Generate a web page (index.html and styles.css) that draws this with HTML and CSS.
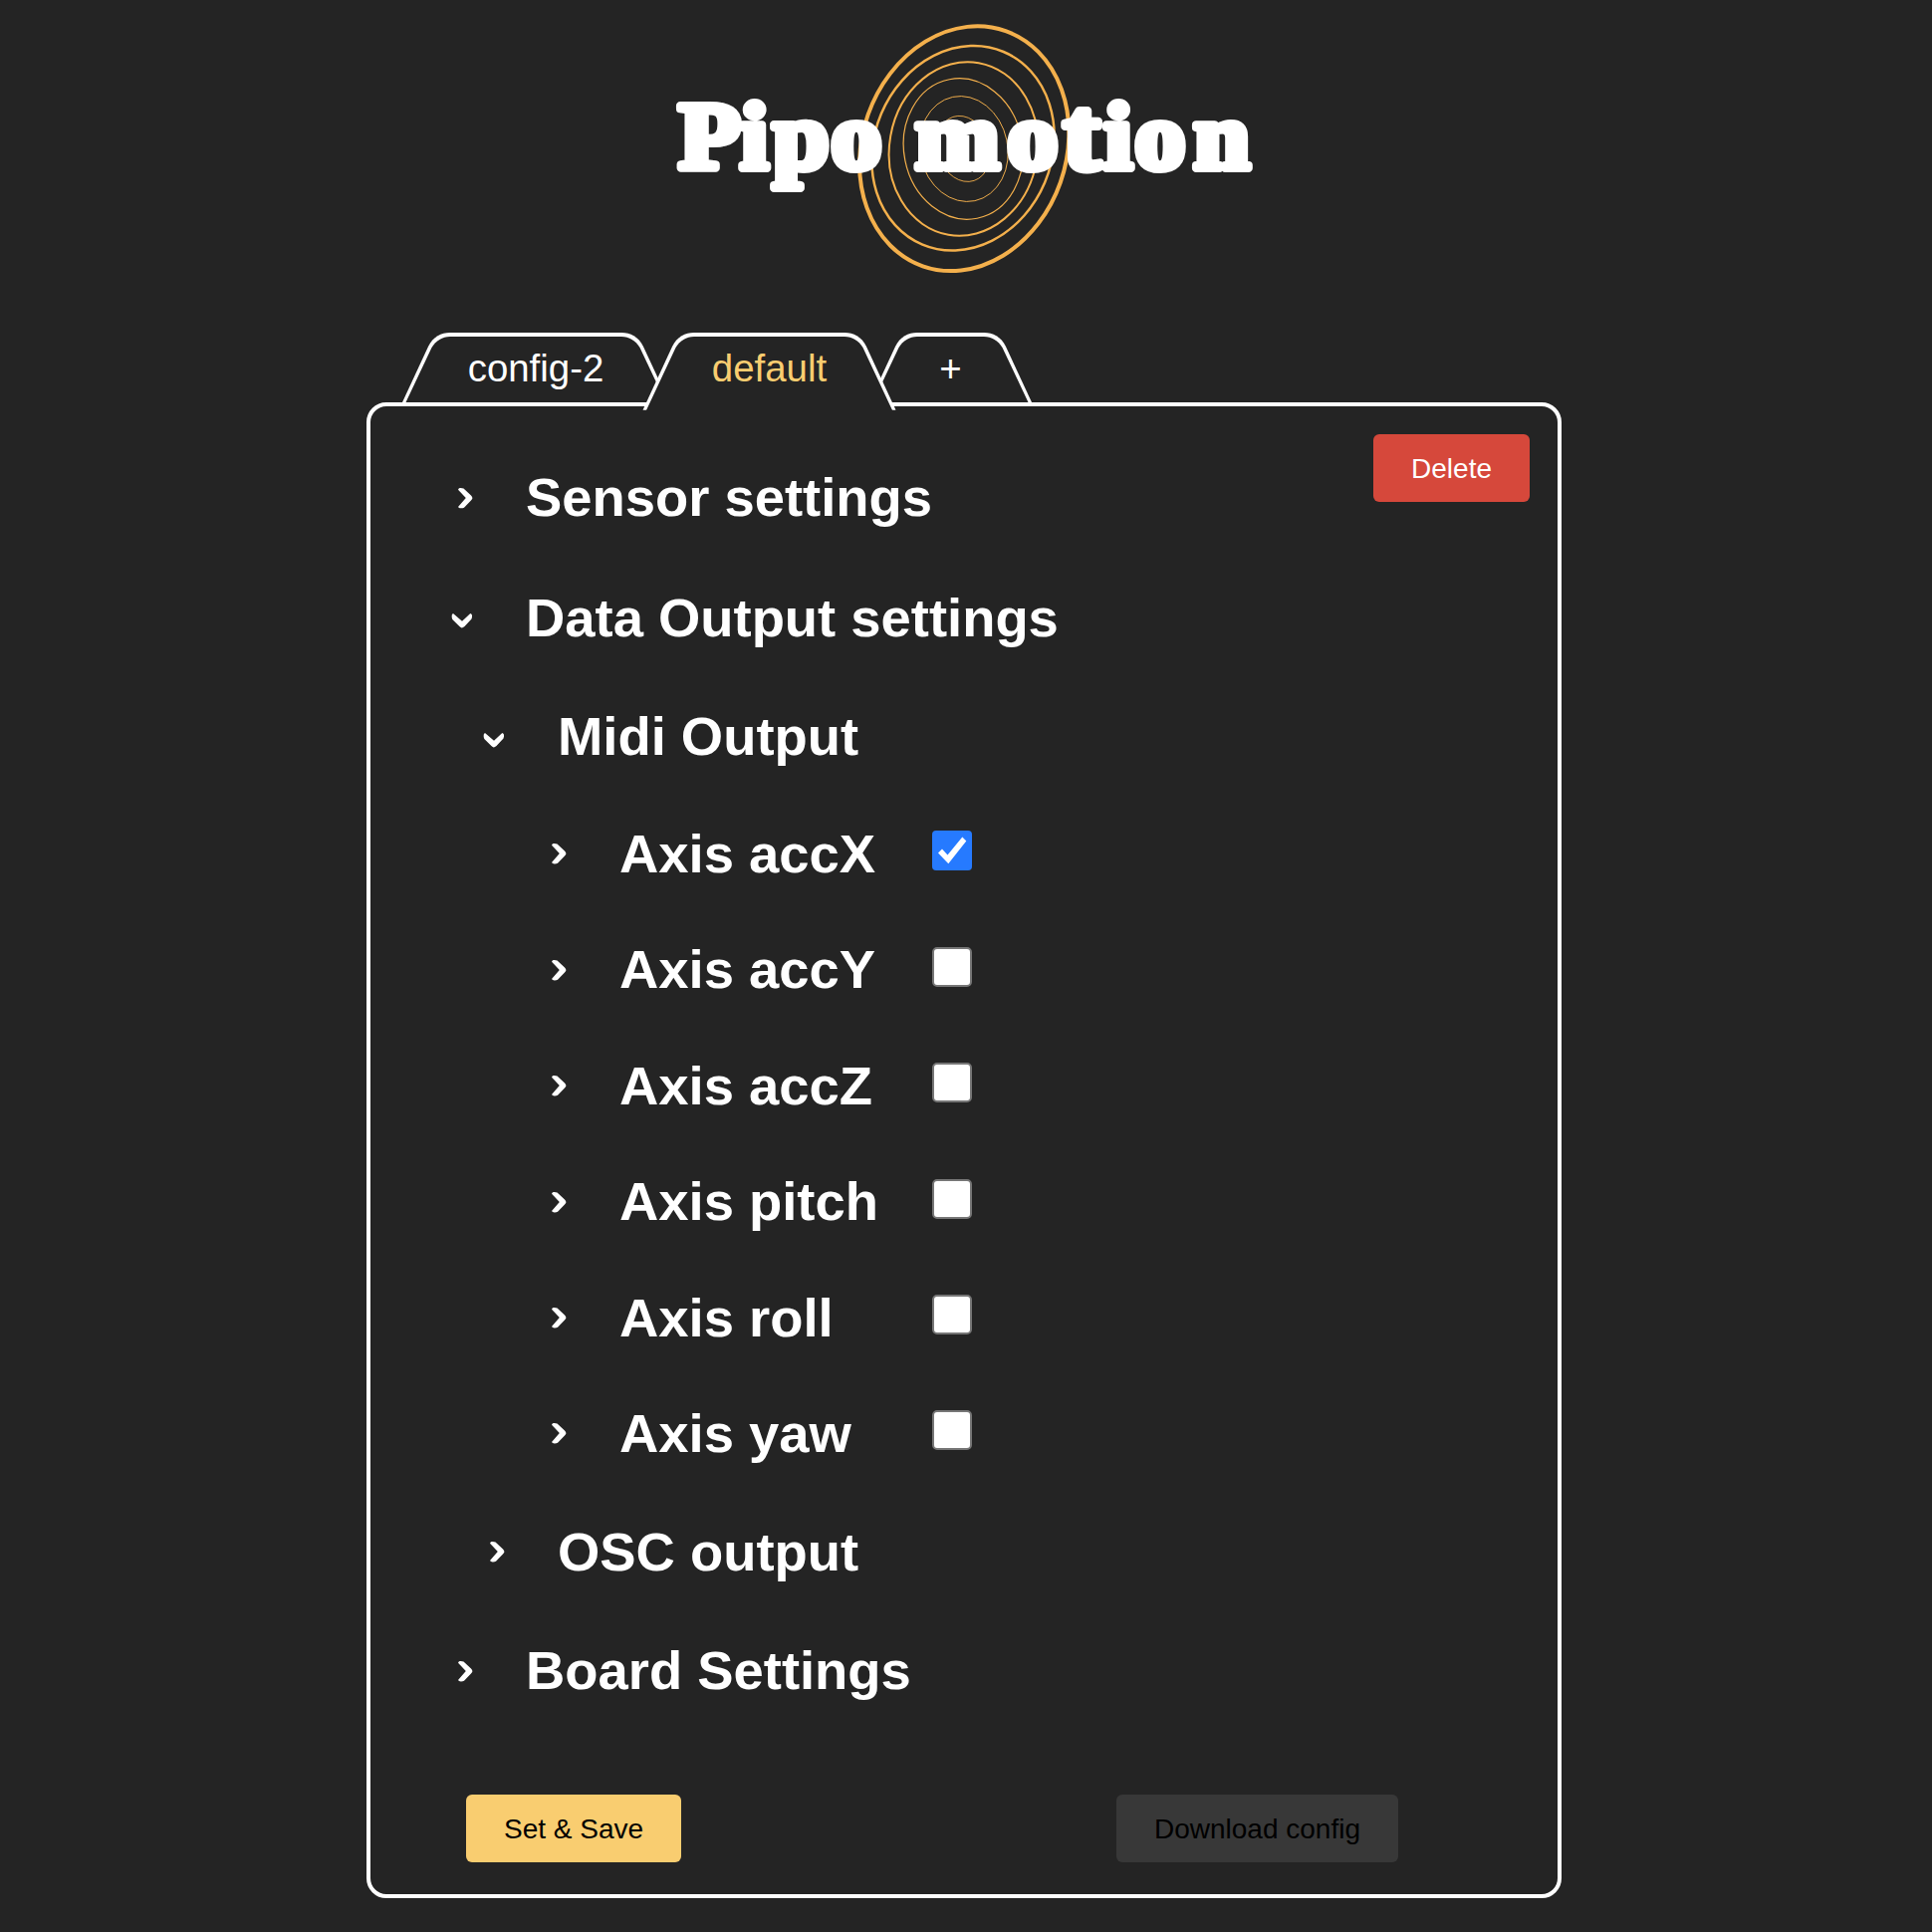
FILE: index.html
```html
<!DOCTYPE html>
<html lang="en">
<head>
<meta charset="utf-8">
<title>Pipo motion</title>
<link rel="stylesheet" href="styles.css">
</head>
<body>
<svg width="0" height="0" class="defs" aria-hidden="true">
  <symbol id="chevron" viewBox="0 0 24 24">
    <path d="M8 3.700Q8.600 2.200 9.700 2Q11.400 1.700 13.500 2.500L21 9.500Q22.400 11.200 22.400 12.200Q22.300 13.200 21 14.600L14 21.700Q12.300 22.600 9.700 22.300Q8.600 22 8 21L15.800 12Z"/>
  </symbol>
</svg>
<header class="logo">
  <svg width="620" height="280" viewBox="660 10 620 280" role="img">
    <g class="rings">
      <ellipse cx="968.200" cy="149.200" rx="102.400" ry="125.200" stroke-width="4" transform="rotate(19.400 968.200 149.200)"/>
      <ellipse cx="967" cy="148.800" rx="89.100" ry="105" stroke-width="2.500" transform="rotate(22.800 967 148.800)"/>
      <ellipse cx="967.500" cy="149.500" rx="74.400" ry="87.600" stroke-width="2" transform="rotate(10 967.500 149.500)"/>
      <ellipse cx="967.200" cy="149.500" rx="59.500" ry="71.100" stroke-width="1.200" transform="rotate(-11.300 967.200 149.500)"/>
      <ellipse cx="967.800" cy="149.500" rx="44" ry="53.300" stroke-width=".9" transform="rotate(-12 967.800 149.500)"/>
      <ellipse cx="967.500" cy="149.400" rx="25.900" ry="33.700" stroke-width=".8" transform="rotate(-18.400 967.500 149.400)"/>
    </g>
    <text class="wordmark" transform="scale(1.07 1)" y="169.500" x="637 694.700 725.300 779.800 830 859 945.300 998 1036.300 1065 1120">Pipo mo<tspan class="tall">t</tspan>ion</text>
  </svg>
</header>
<main class="config">
  <nav class="tabs">
    <button class="tab first">
      <svg class="shape" width="268" height="70"><path class="edge" d="M0 70L26 14C31 4 39 0 48 0H220C229 0 237 4 242 14L268 70Z"/><path class="face" d="M3.500 70L29.500 15C34 8 40 4 48 4H220C228 4 234 8 238.500 15L264.500 70Z"/></svg>
      <span>config-2</span>
    </button>
    <button class="tab active">
      <svg class="shape" width="247" height="78"><path class="edge" d="M-3.500 77.700L26 14C31 4 39 0 48 0H199C208 0 216 4 221 14L250.500 77.700Z"/><path class="face" d="M0 78L29.500 15C34 8 40 4 48 4H199C207 4 213 8 217.500 15L247 78Z"/></svg>
      <span>default</span>
    </button>
    <button class="tab add">
      <svg class="shape" width="163" height="70"><path class="edge" d="M0 70L26 14C31 4 39 0 48 0H115C124 0 132 4 137 14L163 70Z"/><path class="face" d="M3.500 70L29.500 15C34 8 40 4 48 4H115C123 4 129 8 133.500 15L159.500 70Z"/></svg>
      <span>+</span>
    </button>
  </nav>
  <section class="panel">
    <div class="head">
      <h2 class="row top"><svg class="chev"><use href="#chevron"/></svg>Sensor settings</h2>
      <button class="btn delete">Delete</button>
    </div>
    <div class="body">
      <h2 class="row top"><svg class="chev open"><use href="#chevron"/></svg>Data Output settings</h2>
      <div class="group">
        <h3 class="row mid"><svg class="chev open"><use href="#chevron"/></svg>Midi Output</h3>
        <div class="axes">
          <label class="row axis"><svg class="chev"><use href="#chevron"/></svg><span class="name">Axis accX</span><input type="checkbox" checked></label>
          <label class="row axis"><svg class="chev"><use href="#chevron"/></svg><span class="name">Axis accY</span><input type="checkbox"></label>
          <label class="row axis"><svg class="chev"><use href="#chevron"/></svg><span class="name">Axis accZ</span><input type="checkbox"></label>
          <label class="row axis"><svg class="chev"><use href="#chevron"/></svg><span class="name">Axis pitch</span><input type="checkbox"></label>
          <label class="row axis"><svg class="chev"><use href="#chevron"/></svg><span class="name">Axis roll</span><input type="checkbox"></label>
          <label class="row axis"><svg class="chev"><use href="#chevron"/></svg><span class="name">Axis yaw</span><input type="checkbox"></label>
        </div>
        <h3 class="row mid"><svg class="chev"><use href="#chevron"/></svg>OSC output</h3>
      </div>
      <h2 class="row top"><svg class="chev"><use href="#chevron"/></svg>Board Settings</h2>
    </div>
    <footer class="actions">
      <button class="btn save">Set &amp; Save</button>
      <button class="btn download" disabled>Download config</button>
    </footer>
  </section>
</main>
</body>
</html>
```

FILE: styles.css
```css
* { box-sizing: border-box; }
body {
  margin: 0;
  height: 1940px;
  overflow: hidden;
  background: #242424;
  color: #fff;
  font-family: "Liberation Sans", Arial, sans-serif;
}
.defs { display: block; }
.logo { height: 334px; padding: 10px 0 0 660px; }
.logo svg { display: block; }
.rings { fill: none; stroke: #f4b04c; }
.wordmark {
  font: bold 95px "Liberation Serif", serif;
  fill: #fff;
  stroke: #fff;
  stroke-width: 8px;
  stroke-linejoin: round;
}
.tall { font-size: 104px; }

.config { width: 1200px; margin-left: 368px; }
.tabs {
  position: relative;
  z-index: 1;
  display: flex;
  height: 70px;
  padding-left: 36px;
}
.tab {
  position: relative;
  height: 70px;
  margin: 0;
  padding: 2px 0 0;
  border: 0;
  background: none;
  color: #fff;
  font: 38.4px "Liberation Sans", Arial, sans-serif;
}
.tab + .tab { margin-left: -23px; }
.tab span { position: relative; }
.first { width: 268px; }
.active { width: 247px; z-index: 1; color: #f9cd70; }
.add { width: 163px; }
.shape { position: absolute; left: 0; top: 0; overflow: visible; }
.edge { fill: #fff; }
.face { fill: #242424; }

.panel {
  height: 1502px;
  padding: 28px 28px 0;
  border: 4px solid #fff;
  border-radius: 20px;
}
.head {
  display: flex;
  justify-content: space-between;
  align-items: flex-start;
  height: 124px;
  padding-left: 52px;
}
.head .row { margin-top: 3.5px; }
.body { height: 1242px; padding-left: 52px; }
.btn {
  height: 68px;
  padding: 2px 38px 0;
  border: 0;
  border-radius: 6px;
  font: 28px "Liberation Sans", Arial, sans-serif;
}
.delete { background: #d6483b; color: #fff; }
.row { margin: 0; font-size: 54.4px; font-weight: bold; display: flex; align-items: center; }
.top { height: 120.5px; }
.mid { height: 118.8px; }
.axis { height: 116.4px; }
.chev { flex: none; width: 24px; height: 24px; fill: #fff; margin-right: 52px; }
.open { transform: rotate(90deg); }
.group { padding-left: 32px; }
.axes { padding: 0 0 1px 62px; }
.name { width: 314px; }
input {
  appearance: none;
  width: 40px;
  height: 40px;
  margin: 0 0 6px;
  border: 2px solid #767676;
  border-radius: 5px;
  background: #fff;
}
input:checked { border: 0; background: #267aff; border-radius: 4px; }
input:checked::before {
  content: "";
  display: block;
  width: 40px;
  height: 40px;
  background: #fff;
  clip-path: polygon(6px 22px, 10px 18px, 15.5px 24px, 30.3px 6px, 34.3px 10px, 16.3px 32.7px);
}
.actions {
  display: flex;
  justify-content: space-between;
  padding: 0 132px 0 68px;
}
.save { background: #f9cd70; color: #000; }
.download { background: #383838; color: #000; }
```
